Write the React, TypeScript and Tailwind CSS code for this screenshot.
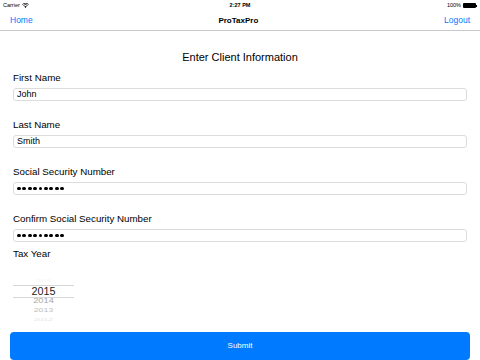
import React from 'react'

const font = { fontFamily: '"Liberation Sans", Arial, sans-serif' }

function Dots() {
  return (
    <div className="flex items-center gap-[1.6px]">
      {Array.from({ length: 9 }).map((_, i) => (
        <div key={i} className="w-[3.8px] h-[3.8px] rounded-full bg-black" />
      ))}
    </div>
  )
}

function Field({ label, value, secret }: { label: string; value: string; secret?: boolean }) {
  return (
    <div className="flex flex-col">
      <div className="h-[14px] text-[9.75px] leading-[14px] text-black">{label}</div>
      <div className="mt-[3px] h-[13px] rounded-[3px] border border-[#dcdcdc] px-[3px] flex items-center">
        {secret ? <Dots /> : <span className="text-[9px] leading-[11px] text-black">{value}</span>}
      </div>
    </div>
  )
}

export default function App() {
  return (
    <div className="h-[360px] w-[480px] bg-white flex flex-col overflow-hidden" style={font}>
      {/* status bar */}
      <div className="h-[11px] px-[3px] flex items-center justify-between text-[5.5px] text-black">
        <div className="w-[60px] flex items-center gap-[2px]">
          <span>Carrier</span>
          <svg width="7" height="5" viewBox="0 0 14 10">
            <path d="M7 10 L4.5 7 A3.6 3.6 0 0 1 9.5 7 Z" fill="#000" />
            <path d="M2.8 5 A6 6 0 0 1 11.2 5" stroke="#000" strokeWidth="1.6" fill="none" />
            <path d="M0.8 3 A8.8 8.8 0 0 1 13.2 3" stroke="#000" strokeWidth="1.6" fill="none" />
          </svg>
        </div>
        <span className="font-bold">2:27 PM</span>
        <div className="w-[60px] flex items-center justify-end gap-[2px]">
          <span>100%</span>
          <div className="flex items-center">
            <div className="w-[13px] h-[5px] bg-black rounded-[1px]" />
            <div className="w-[1px] h-[2px] bg-black" />
          </div>
        </div>
      </div>

      {/* nav bar */}
      <div className="h-[20px] border-b border-[#c8c8cc] px-[10px] flex items-center justify-between text-[8.5px]">
        <span className="text-[#007aff]">Home</span>
        <span className="font-semibold text-[8px] text-black">ProTaxPro</span>
        <span className="text-[#007aff]">Logout</span>
      </div>

      <div className="mt-[17px] h-[18px] text-center text-[11px] leading-[18px] text-black">
        Enter Client Information
      </div>

      <div className="mt-[5px] px-[13px] flex flex-col gap-[17px]">
        <Field label="First Name" value="John" />
        <Field label="Last Name" value="Smith" />
        <Field label="Social Security Number" value="" secret />
        <Field label="Confirm Social Security Number" value="" secret />
      </div>

      <div className="mt-[5px] px-[13px] h-[14px] text-[9.75px] leading-[14px] text-black">Tax Year</div>

      {/* year picker */}
      <div className="mt-[16px] ml-[13px] w-[61px] flex flex-col items-center">
        <div className="h-[8px] text-[7px] leading-[8px] text-[#f4f4f4] scale-y-[0.6]">2016</div>
        <div className="w-full h-[13px] border-y border-[#d6d6d6] flex items-center justify-center text-[10.8px] leading-[11px] text-[#222]">
          2015
        </div>
        <div className="h-[6px] text-[9.3px] leading-[6px] text-[#a6a6a6] scale-y-[0.75]">2014</div>
        <div className="h-[12px] text-[8.8px] leading-[12px] text-[#c0c0c0] scale-y-[0.65]">2013</div>
        <div className="h-[6px] text-[8.5px] leading-[6px] text-[#e2e2e2] scale-y-[0.5]">2012</div>
      </div>

      <div className="mt-auto mx-[10px] h-[28px] rounded-[4px] bg-[#007aff] flex items-center justify-center text-[8px] text-white">
        Submit
      </div>
    </div>
  )
}
